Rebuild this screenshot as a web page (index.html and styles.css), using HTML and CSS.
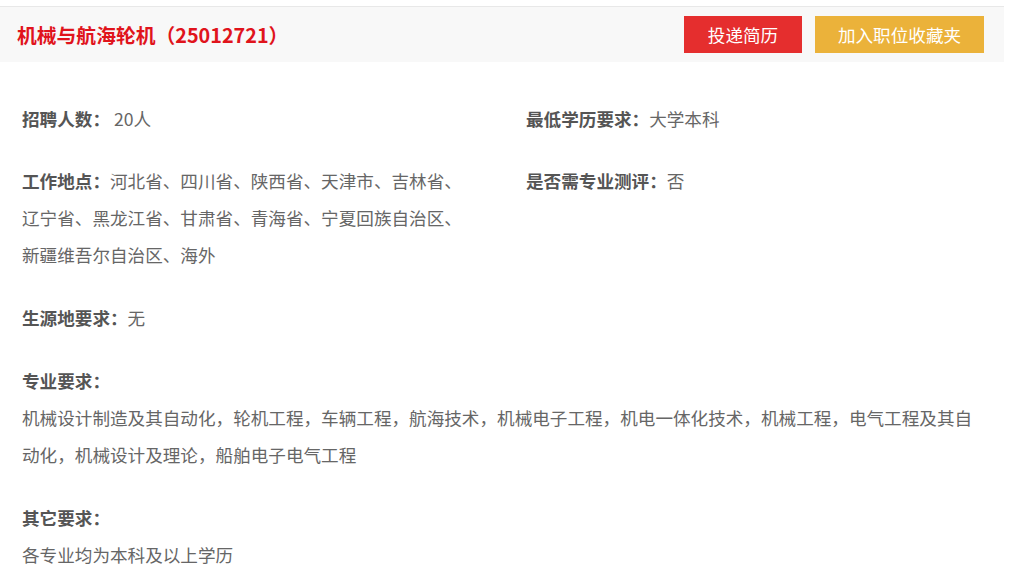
FILE: index.html
```html
<!DOCTYPE html>
<html lang="zh-CN">
<head>
    <meta charset="UTF-8">
    <title>职位详情</title>
    <link rel="stylesheet" href="styles.css">
</head>
<body>
    <div class="job">
        <!-- 职位标题栏 -->
        <div class="job-head">
            <h1 class="job-title">机械与航海轮机（25012721）</h1>
            <div class="job-actions">
                <a href="#" class="btn btn-apply">投递简历</a>
                <a href="#" class="btn btn-fav">加入职位收藏夹</a>
            </div>
        </div>

        <!-- 职位信息 -->
        <div class="job-body">
            <div class="info-grid">
                <p class="info"><b>招聘人数：</b> 20人</p>
                <p class="info"><b>最低学历要求：</b>大学本科</p>
                <p class="info"><b>工作地点：</b>河北省、四川省、陕西省、天津市、吉林省、辽宁省、黑龙江省、甘肃省、青海省、宁夏回族自治区、新疆维吾尔自治区、海外</p>
                <p class="info"><b>是否需专业测评：</b>否</p>
            </div>
            <p class="info block"><b>生源地要求：</b>无</p>
            <div class="block">
                <p class="info"><b>专业要求：</b></p>
                <p class="info">机械设计制造及其自动化，轮机工程，车辆工程，航海技术，机械电子工程，机电一体化技术，机械工程，电气工程及其自动化，机械设计及理论，船舶电子电气工程</p>
            </div>
            <div class="block">
                <p class="info"><b>其它要求：</b></p>
                <p class="info">各专业均为本科及以上学历</p>
            </div>
        </div>
    </div>
</body>
</html>
```

FILE: styles.css
```css
* {
    margin: 0;
    padding: 0;
    box-sizing: border-box;
}

body {
    font-family: "Noto Sans CJK SC", "Liberation Sans", sans-serif;
    color: #666;
    background: #fff;
}

.job {
    width: 1004px;
    margin-top: 6px;
    border-top: 1px solid #e8e8e8;
}

/* 标题栏 */
.job-head {
    display: flex;
    align-items: center;
    justify-content: space-between;
    height: 55px;
    padding: 0 20px 0 17px;
    background: #f8f8f8;
}

.job-title {
    font-size: 19.8px;
    font-weight: bold;
    color: #e0141c;
    line-height: 1;
}

.job-actions {
    display: flex;
    gap: 13px;
}

.btn {
    display: block;
    height: 37px;
    line-height: 37px;
    font-size: 17.6px;
    color: #fff;
    text-decoration: none;
    text-align: center;
}

.btn-apply {
    width: 118px;
    background: #e52e2e;
}

.btn-fav {
    width: 169px;
    background: #ebb23a;
}

/* 信息区 */
.job-body {
    padding: 38px 22px 0;
}

.info-grid {
    display: grid;
    grid-template-columns: 450px 1fr;
    column-gap: 54px;
    row-gap: 25px;
    align-items: start;
}

.info {
    font-size: 17.6px;
    line-height: 37px;
}

.info b {
    color: #555;
}

.block {
    margin-top: 26px;
}
```
